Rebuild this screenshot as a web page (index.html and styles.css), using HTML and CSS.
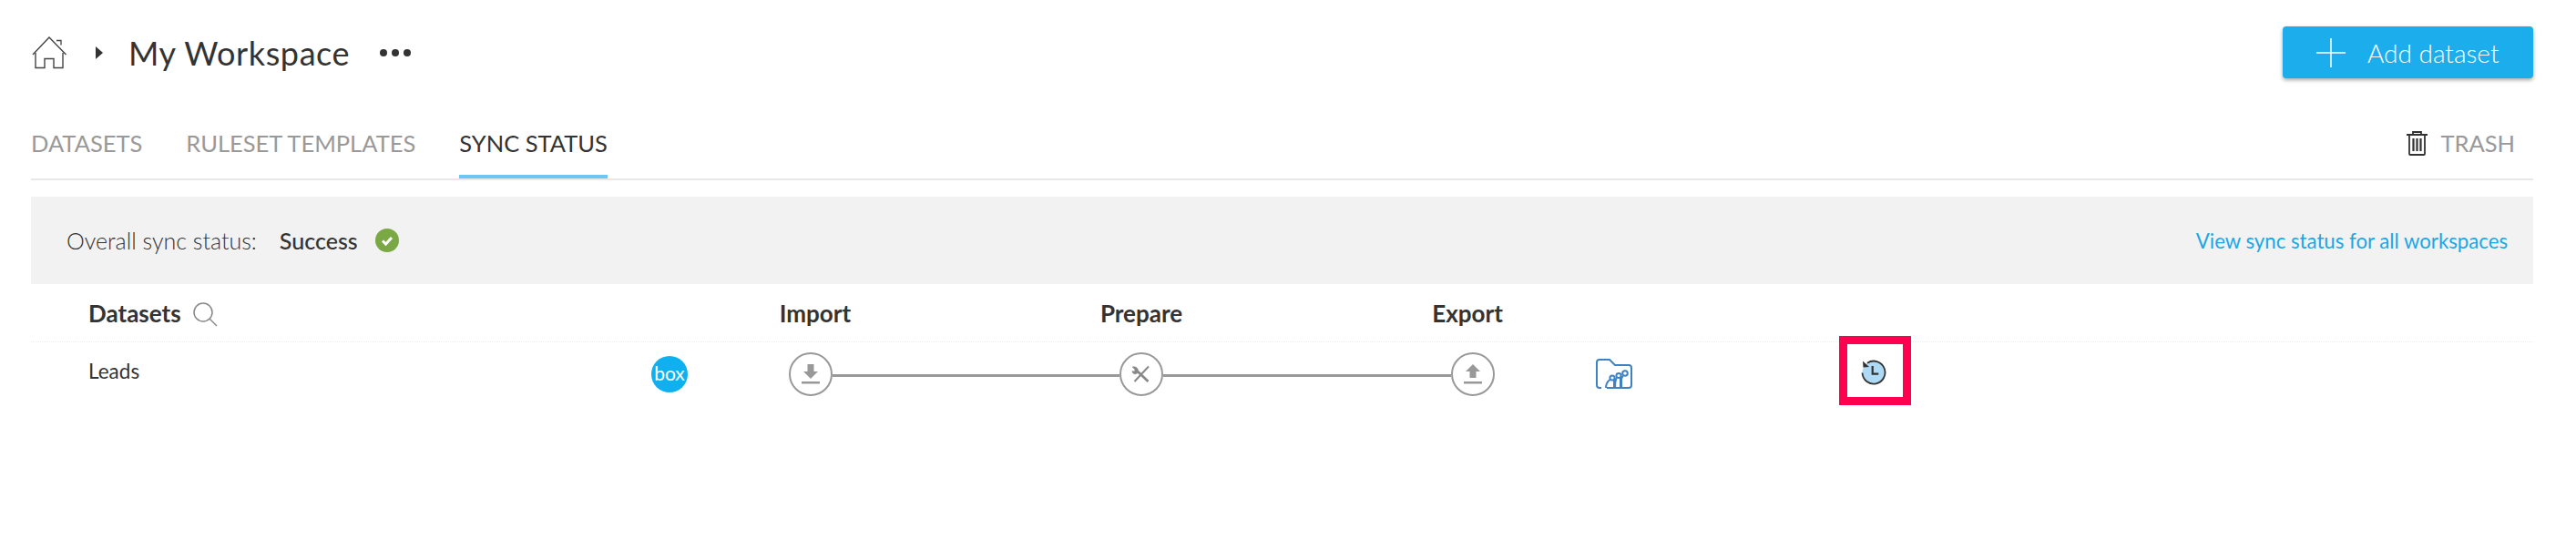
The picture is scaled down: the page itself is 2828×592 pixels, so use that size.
FILE: index.html
```html
<!DOCTYPE html>
<html lang="en">
<head>
  <meta charset="UTF-8" />
  <title>Sync Status</title>
  <link rel="stylesheet" href="styles.css">
</head>
<body>
  <div class="page">
    <div class="top-bar">
      <div class="crumbs">
        <svg class="home-icon" width="38" height="36" viewBox="0 0 38 36" fill="none" stroke="#444" stroke-width="1.4">
          <path d="M1 20 L19 1 L37.5 20" />
          <path d="M4 18 V34.5 H14 V24.5 H24 V34.5 H34 V18" />
          <path d="M27 4.5 H32 V9.5" stroke-width="1.3" />
        </svg>
        <span class="caret"></span>
        <h1 class="title">My Workspace</h1>
        <div class="dots"><span></span><span></span><span></span></div>
      </div>
      <button class="add-btn">
        <svg width="32" height="32" viewBox="0 0 32 32" stroke="#fff" stroke-width="1.5">
          <path d="M0 16 H32 M16 0 V32" />
        </svg>
        Add dataset
      </button>
    </div>

    <div class="tabs">
      <a class="tab">DATASETS</a>
      <a class="tab">RULESET TEMPLATES</a>
      <a class="tab active">SYNC STATUS</a>
      <a class="trash">
        <svg width="23" height="28" viewBox="0 0 23 28" fill="none" stroke="#333" stroke-width="1.8">
          <path d="M0 5 H23 M7 5 V2 H16 V5" />
          <path d="M3 5 V26 Q3 27 4 27 H19 Q20 27 20 26 V5" />
          <path d="M7.5 9 V23 M11.5 9 V23 M15.5 9 V23" stroke-width="2.2" />
        </svg>
        TRASH
      </a>
    </div>

    <div class="banner">
      <div class="overall">
        <span class="overall-label">Overall sync status:</span>
        <span class="overall-value">Success</span>
        <svg width="26" height="26" viewBox="0 0 26 26">
          <circle cx="13" cy="13" r="13" fill="#7aa845" />
          <path d="M8 13.5 L11.5 17 L18 10" fill="none" stroke="#fff" stroke-width="3" />
        </svg>
      </div>
      <a class="all-link">View sync status for all workspaces</a>
    </div>

    <div class="sync-grid sync-head">
      <div class="col-name">
        Datasets
        <svg class="search-icon" width="27" height="27" viewBox="0 0 27 27" fill="none" stroke="#888" stroke-width="1.5">
          <circle cx="11" cy="11" r="10" />
          <path d="M18 18 L26 26" />
        </svg>
      </div>
      <div></div>
      <div></div>
      <div class="step-label import-label">Import</div>
      <div></div>
      <div class="step-label">Prepare</div>
      <div></div>
      <div class="step-label export-label">Export</div>
    </div>

    <div class="sync-grid sync-row">
      <div class="col-name leads">Leads</div>
      <div class="box-logo">box</div>
      <div></div>
      <div class="step">
        <svg width="20" height="24" viewBox="0 0 20 24" fill="#999">
          <path d="M6.5 1 H13.5 V9 H18 L10 17 L2 9 H6.5 Z" />
          <rect x="0" y="20" width="20" height="2.5" />
        </svg>
      </div>
      <div class="connector"></div>
      <div class="step">
        <svg width="24" height="24" viewBox="0 0 24 24" fill="none" stroke="#888">
          <path d="M20 3.5 L4.5 20" stroke-width="2" />
          <path d="M8 9 L19.5 20" stroke-width="2.8" />
          <path d="M8.5 10 C9.5 6 6 2.5 2 4 L5 7 L4.5 9 L2 8.5 C2 12 6 13 8.5 10 Z" fill="#888" stroke-width="0.5" />
        </svg>
      </div>
      <div class="connector"></div>
      <div class="step">
        <svg width="20" height="24" viewBox="0 0 20 24" fill="#999">
          <path d="M10 1 L18 9 H13.5 V16 H6.5 V9 H2 Z" />
          <rect x="0" y="20" width="20" height="2.5" />
        </svg>
      </div>
      <div></div>
      <svg width="40" height="34" viewBox="0 0 40 34" fill="none" stroke="#3f82c4" stroke-width="2">
        <path d="M6 32 H4 Q1 32 1 29 V4 Q1 1 4 1 H15 L21 7 H36 Q39 7 39 10 V29 Q39 32 36 32 H12" />
        <path d="M11 32 Q11 26 15.5 23 M20 32 V23 M21 32 Q21 25 22.5 21 M27 32 V20 M28 32 V22 Q29 20 29.5 19" />
        <circle cx="18" cy="21" r="2.6" />
        <circle cx="25" cy="18.5" r="2.6" />
        <circle cx="32" cy="16" r="2.8" />
      </svg>
      <div></div>
      <div class="history-mark">
        <svg width="28" height="28" viewBox="0 0 28 28" fill="none">
          <circle cx="14" cy="14" r="12.5" fill="#aedaf5" />
          <path d="M7 3.7 A12.5 12.5 0 1 1 1.5 14.5" stroke="#333" stroke-width="1.8" />
          <path d="M2 1.5 L2.5 8.5 L9 8 Z" fill="#333" />
          <path d="M12.7 7 V15.7 H19.3" stroke="#333" stroke-width="2.2" />
        </svg>
      </div>
    </div>
  </div>
</body>
</html>
```

FILE: styles.css
```css
* {
  box-sizing: border-box;
}
body {
  margin: 0;
  background: #fff;
  font-family: 'Lato', sans-serif;
  color: #333;
}
.page {
  padding: 29px 47px 0 34px;
}

/* top bar */
.top-bar {
  display: flex;
  justify-content: space-between;
  align-items: center;
  height: 57px;
}
.crumbs {
  display: flex;
  align-items: center;
}
.home-icon {
  margin-left: 1px;
  margin-top: 1px;
}
.caret {
  width: 0;
  height: 0;
  margin: 0 28px 0 32px;
  border-left: 8px solid #333;
  border-top: 7px solid transparent;
  border-bottom: 7px solid transparent;
}
.title {
  margin: 0;
  font-size: 36px;
  font-weight: 400;
  letter-spacing: 0.6px;
}
.dots {
  display: flex;
  gap: 5px;
  margin-left: 33px;
}
.dots span {
  width: 8px;
  height: 8px;
  border-radius: 50%;
  background: #333;
}
.add-btn {
  display: flex;
  align-items: center;
  gap: 24px;
  width: 275px;
  height: 57px;
  padding: 0 0 0 37px;
  border: none;
  border-radius: 4px;
  background: #1cadec;
  box-shadow: 0 2px 4px rgba(0, 0, 0, 0.35);
  color: #fff;
  font-family: 'Lato', sans-serif;
  font-size: 28px;
  font-weight: 300;
}

/* tabs */
.tabs {
  display: flex;
  align-items: flex-start;
  gap: 48px;
  height: 112px;
  padding-top: 46px;
  border-bottom: 2px solid #e8e8e8;
  font-size: 25.5px;
}
.tab {
  height: 64px;
  padding-top: 10px;
  color: #999;
}
.tab.active {
  color: #333;
  border-bottom: 4px solid #6ec6f5;
}
.trash {
  display: flex;
  align-items: center;
  gap: 14px;
  height: 50px;
  margin-left: auto;
  padding-right: 20px;
  color: #999;
}

/* overall status */
.banner {
  display: flex;
  justify-content: space-between;
  align-items: center;
  height: 96px;
  margin-top: 18px;
  padding: 0 28px 0 39px;
  background: #f2f2f2;
}
.overall {
  display: flex;
  align-items: center;
}
.overall-label {
  font-size: 25px;
  font-weight: 300;
}
.overall-value {
  margin: 0 19px 0 25px;
  font-size: 25px;
  font-weight: 500;
}
.all-link {
  color: #1aa7e8;
  font-size: 22.2px;
}

/* sync table */
.sync-grid {
  display: grid;
  grid-template-columns: 676px 50px 106px 48px 315px 48px 316px 48px 111px 40px 227px 79px;
  align-items: center;
}
.sync-head {
  height: 64px;
  border-bottom: 1px dotted #eee;
  font-size: 26px;
  font-weight: 700;
}
.sync-row {
  grid-template-rows: 70px;
}
.col-name {
  display: flex;
  align-items: center;
  padding-left: 63px;
}
.leads {
  margin-bottom: 8px;
  font-size: 22.5px;
}
.search-icon {
  margin-left: 13px;
  margin-top: 4px;
}
.step-label {
  display: flex;
  justify-content: center;
  white-space: nowrap;
}
.import-label {
  padding-left: 10px;
}
.export-label {
  padding-right: 12px;
}
.box-logo {
  width: 40px;
  height: 40px;
  margin-left: 5px;
  border-radius: 50%;
  background: #0fb0ef;
  color: #fff;
  font-size: 21px;
  line-height: 38px;
  text-align: center;
}
.step {
  display: flex;
  justify-content: center;
  align-items: center;
  width: 48px;
  height: 48px;
  border: 2px solid #999;
  border-radius: 50%;
}
.connector {
  height: 3px;
  margin-top: 2px;
  background: #999;
}
.history-mark {
  display: flex;
  justify-content: center;
  align-items: center;
  height: 76px;
  margin-bottom: 8px;
  border: 9px solid #ff0050;
  padding: 4px 3px 0 0;
}
```
